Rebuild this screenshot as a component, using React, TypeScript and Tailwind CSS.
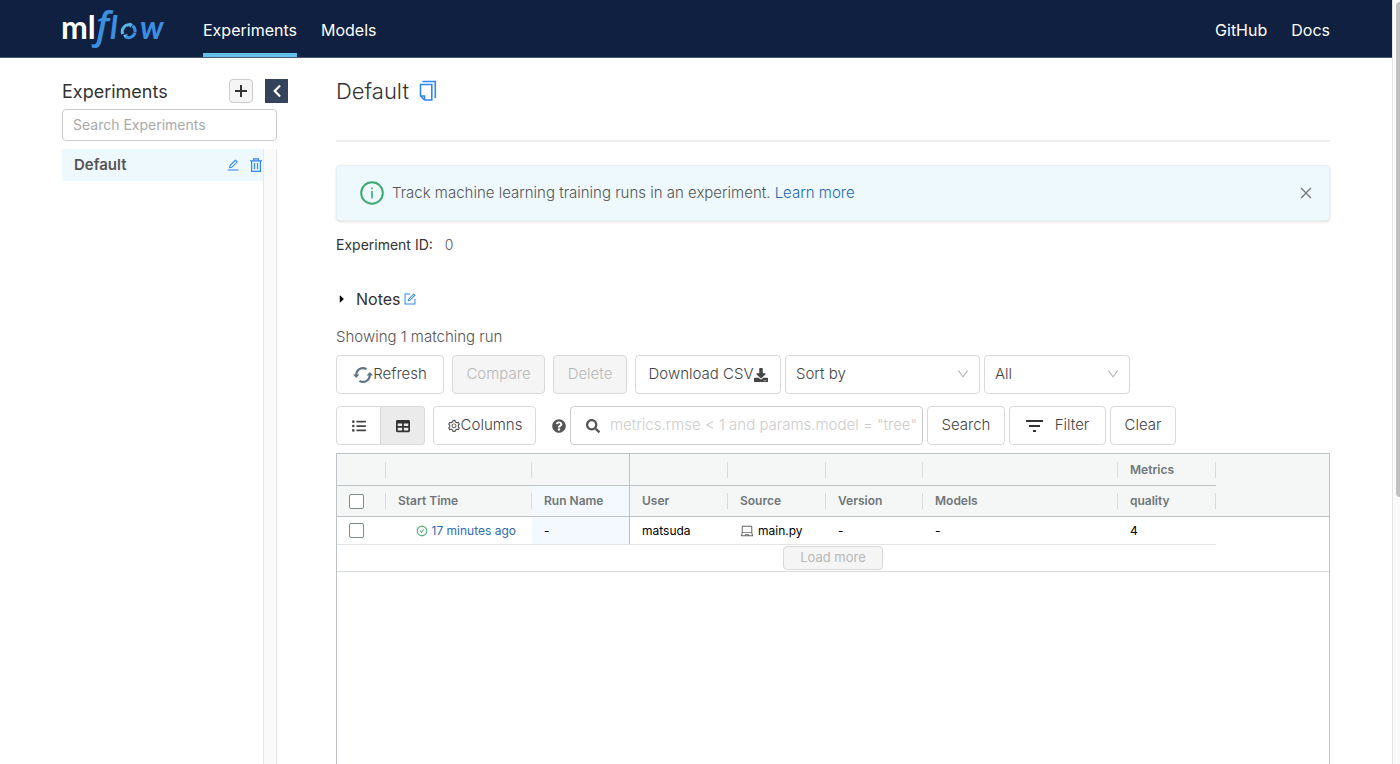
import type { ReactNode } from "react";
import clsx from "clsx";
import {
    AiOutlineCheckCircle,
    AiOutlineClose,
    AiOutlineDown,
    AiOutlineEdit,
    AiOutlineForm,
    AiOutlineLaptop,
    AiOutlineSetting,
} from "react-icons/ai";
import {
    FaCaretRight,
    FaChevronLeft,
    FaDownload,
    FaListUl,
    FaQuestionCircle,
    FaSearch,
    FaTable,
} from "react-icons/fa";

function Logo() {
    return (
        <svg
            width="108"
            height="56"
            viewBox="-2 -7 108 56"
            role="img"
            aria-label="mlflow"
            className="-ml-0.5 shrink-0 overflow-visible"
        >
            <g fontFamily="Lato, sans-serif" fontWeight="700" fontSize="32">
                <text x="-1" y="31" fill="#ffffff">ml</text>
                <text x="48" y="31" fill="#3c8fe0" fontStyle="italic">l</text>
                <text x="78" y="31" fill="#3c8fe0" fontStyle="italic">w</text>
            </g>
            <text
                x="34"
                y="31"
                fill="#3c8fe0"
                fontFamily="Open Sans, sans-serif"
                fontStyle="italic"
                fontWeight="600"
                fontSize="38"
            >
                f
            </text>
            <path d="M60.800 26A6.500 6.500 0 0 1 68 17" fill="none" stroke="#58b9e4" strokeWidth="3" />
            <path d="M70.500 17.800A6.500 6.500 0 0 1 73 24" fill="none" stroke="#3c8fe0" strokeWidth="3" />
            <path d="M73 24.500A6.500 6.500 0 0 1 63 28.500" fill="none" stroke="#3c8fe0" strokeWidth="3" />
            <path d="M67 14.500l4 1.500-3 4zM61 27l5-1-3 4z" fill="#58b9e4" />
        </svg>
    );
}

function CopyIcon() {
    return (
        <svg width="18" height="22" viewBox="0 0 18 22" fill="none" stroke="#2f86f6" strokeWidth="1.6">
            <path d="M3.500 1.500H16.300V18" />
            <path d="M1.500 4.500H12.800V20H5.500L1.500 16z" />
            <path d="M1.500 16H5.500V20" />
        </svg>
    );
}

function TrashIcon() {
    return (
        <svg width="12" height="14" viewBox="0 0 12 14" fill="none" stroke="#2f86f6" strokeWidth="1.200">
            <path d="M0 2.800h12M3.700 2.800V.800h4.600v2M1.600 3v10.300h8.800V3M4.500 5v6.300M7.500 5v6.300" />
        </svg>
    );
}

function RefreshIcon() {
    return (
        <svg width="20" height="16" viewBox="0 0 20 16" fill="none">
            <path d="M3.200 8.500A6.800 6.800 0 0 1 13.500 2.200" stroke="#5f7281" strokeWidth="2" />
            <path d="M16.800 7.500A6.800 6.800 0 0 1 6.500 13.800" stroke="#5f7281" strokeWidth="2" />
            <path d="M0 7.500h6.400L3.200 11zM13.600 8.500H20L16.800 5z" fill="#5f7281" />
        </svg>
    );
}

function FilterIcon() {
    return (
        <svg width="17" height="12" viewBox="0 0 17 12" fill="#333333">
            <path d="M0 0h17v2H0zM3 5h11v2H3zM7 10h3v2H7z" />
        </svg>
    );
}

function Button({
    children,
    className,
    disabled,
}: {
    children: ReactNode;
    className?: string;
    disabled?: boolean;
}) {
    return (
        <button
            disabled={disabled}
            className={clsx(
                "flex h-[39px] shrink-0 items-center justify-center rounded border border-[#d9d9d9]",
                disabled ? "bg-[#f5f5f5] text-[#b8b8b8]" : "bg-white text-[#444444]",
                className
            )}
        >
            {children}
        </button>
    );
}

function Select({ label, className }: { label: string; className: string }) {
    return (
        <div className={clsx("relative", className)}>
            <select
                aria-label={label}
                className="h-[39px] w-full appearance-none rounded border border-[#d9d9d9] bg-white px-2.5 text-[#444444]"
            >
                <option>{label}</option>
            </select>
            <AiOutlineDown className="pointer-events-none absolute top-3 right-2.5 size-3.5 text-[#b5b5b5]" />
        </div>
    );
}

function Header() {
    return (
        <header className="flex h-[58px] items-center border-b border-[#4d5872] bg-[#0f2040] px-[62px] text-base text-white">
            <Logo />
            <nav className="ml-[35px] flex h-full flex-1 gap-6">
                <a href="#experiments" className="flex items-center border-b-4 border-[#61bfe9] pt-1.5">
                    Experiments
                </a>
                <a href="#models" className="flex items-center pt-0.5">
                    Models
                </a>
                <a href="#github" className="ml-auto flex items-center pt-0.5">
                    GitHub
                </a>
                <a href="#docs" className="flex items-center pt-0.5">
                    Docs
                </a>
            </nav>
        </header>
    );
}

function Sidebar() {
    return (
        <aside className="flex w-[226px] shrink-0 flex-col">
            <div className="flex h-6 items-center">
                <h1 className="flex-1 pt-0.5 text-lg text-[#333333]">Experiments</h1>
                <button
                    aria-label="New experiment"
                    className="mr-3 flex size-6 items-center justify-center rounded border border-[#cccccc] bg-[#f5f5f5]"
                >
                    <svg width="12" height="12" viewBox="0 0 12 12" stroke="#333333" strokeWidth="2">
                        <path d="M6 0v12M0 6h12" />
                    </svg>
                </button>
                <button
                    aria-label="Collapse sidebar"
                    className="flex h-6 w-[23px] items-center justify-center bg-[#34425c] text-white"
                >
                    <FaChevronLeft className="size-3.5" />
                </button>
            </div>
            <input
                type="text"
                aria-label="Search Experiments"
                placeholder="Search Experiments"
                className="mt-1.5 h-8 w-[215px] rounded border border-[#cccccc] px-2.5 pb-0.5 text-sm placeholder:text-[#aaaaaa]"
            />
            <div className="mt-2 flex w-[215px] flex-1">
                <div className="flex-1">
                    <div className="flex h-8 items-center bg-[#eef9fd] pl-3 text-[15px] font-semibold text-[#555555]">
                        <a href="#default" className="flex-1">
                            Default
                        </a>
                        <button aria-label="Rename experiment" className="mr-2.5 text-[#2f86f6]">
                            <AiOutlineEdit className="size-3.5" />
                        </button>
                        <button aria-label="Delete experiment" className="mr-px">
                            <TrashIcon />
                        </button>
                    </div>
                </div>
                <div className="w-3.5 border-x border-[#e8e8e8] bg-[#fafafa]" />
            </div>
        </aside>
    );
}

function Toolbar() {
    return (
        <div className="text-[15px] font-light">
            <div className="mt-1.5 flex">
                <Button className="mr-2 w-[108px]">
                    <RefreshIcon />
                    Refresh
                </Button>
                <Button disabled className="mr-2 w-[93px]">
                    Compare
                </Button>
                <Button disabled className="mr-2 w-[74px]">
                    Delete
                </Button>
                <Button className="mr-1 w-[146px]">
                    Download CSV
                    <FaDownload className="size-3.5" />
                </Button>
                <Select label="Sort by" className="mr-1 w-[195px]" />
                <Select label="All" className="w-[146px]" />
            </div>
            <div className="mt-3 flex items-center">
                <button
                    aria-label="List view"
                    className="flex h-[39px] w-[45px] items-center justify-center rounded-l border border-[#d9d9d9] text-[#444444]"
                >
                    <FaListUl className="size-3.5" />
                </button>
                <button
                    aria-label="Table view"
                    className="mr-2 flex h-[39px] w-11 items-center justify-center rounded-r border border-l-0 border-[#d9d9d9] bg-[#ebebeb] text-[#333333]"
                >
                    <FaTable className="size-3.5" />
                </button>
                <Button className="mr-4 w-[103px]">
                    <AiOutlineSetting className="size-3.5" />
                    Columns
                </Button>
                <FaQuestionCircle className="mr-1 size-3.5 text-[#555555]" />
                <label className="mr-1 flex h-[39px] w-[353px] items-center rounded border border-[#cccccc] pl-[15px]">
                    <FaSearch className="size-3.5 text-[#555555]" />
                    <input
                        type="text"
                        aria-label="Search runs"
                        placeholder={'metrics.rmse < 1 and params.model = "tree"'}
                        className="ml-2.5 min-w-0 flex-1 placeholder:text-[#cccccc]"
                    />
                </label>
                <Button className="mr-1 w-[78px]">Search</Button>
                <Button className="mr-1 w-[97px] gap-3">
                    <FilterIcon />
                    Filter
                </Button>
                <Button className="w-[66px]">Clear</Button>
            </div>
        </div>
    );
}

function HeadCell({
    children,
    className,
    last,
}: {
    children?: ReactNode;
    className?: string;
    last?: boolean;
}) {
    return (
        <th className={clsx("border-b border-[#bdc3c7] p-0 text-left font-semibold", className)}>
            <div
                className={clsx(
                    "flex h-4 items-center pl-3",
                    !last && "border-r border-[#d9dcde]"
                )}
            >
                {children}
            </div>
        </th>
    );
}

function RunsTable() {
    return (
        <div className="mt-2 flex-1 border border-b-0 border-[#bdc3c7]">
            <table className="w-full table-fixed border-separate border-spacing-0 text-xs">
                <colgroup>
                    <col className="w-[49px]" />
                    <col className="w-[146px]" />
                    <col className="w-[98px]" />
                    <col className="w-[98px]" />
                    <col className="w-[98px]" />
                    <col className="w-[97px]" />
                    <col className="w-[195px]" />
                    <col className="w-[98px]" />
                    <col />
                </colgroup>
                <thead className="bg-[#f5f7f7] text-[#6f7679]">
                    <tr className="h-8">
                        <HeadCell />
                        <HeadCell />
                        <HeadCell last className="border-r" />
                        <HeadCell />
                        <HeadCell />
                        <HeadCell />
                        <HeadCell />
                        <HeadCell>Metrics</HeadCell>
                        <th />
                    </tr>
                    <tr className="h-[31px]">
                        <HeadCell>
                            <input
                                type="checkbox"
                                aria-label="Select all runs"
                                className="size-[15px] appearance-none rounded-xs border border-[#7f8c8d] bg-white"
                            />
                        </HeadCell>
                        <HeadCell>Start Time</HeadCell>
                        <HeadCell last className="border-r bg-[#f3f9fe]">
                            Run Name
                        </HeadCell>
                        <HeadCell>User</HeadCell>
                        <HeadCell>Source</HeadCell>
                        <HeadCell>Version</HeadCell>
                        <HeadCell>Models</HeadCell>
                        <HeadCell>quality</HeadCell>
                        <th className="border-b border-[#bdc3c7]" />
                    </tr>
                </thead>
                <tbody className="text-black">
                    <tr className="h-7 *:border-[#e2e4e5] *:p-0 *:pl-3">
                        <td className="border-b">
                            <input
                                type="checkbox"
                                aria-label="Select run"
                                className="block size-[15px] appearance-none rounded-xs border border-[#7f8c8d] bg-white"
                            />
                        </td>
                        <td className="border-b">
                            <div className="flex items-center justify-end gap-1 pr-4">
                                <AiOutlineCheckCircle className="size-3 text-[#3caa60]" />
                                <a href="#run" className="text-[#2d6bb8]">
                                    17 minutes ago
                                </a>
                            </div>
                        </td>
                        <td className="border-r border-b border-r-[#bdc3c7]! bg-[#f3f9fe]">-</td>
                        <td className="border-b">matsuda</td>
                        <td className="border-b">
                            <div className="flex items-center gap-1">
                                <AiOutlineLaptop className="size-3.5 text-[#666666]" />
                                main.py
                            </div>
                        </td>
                        <td className="border-b">-</td>
                        <td className="border-b">-</td>
                        <td className="border-b">4</td>
                        <td />
                    </tr>
                </tbody>
            </table>
            <div className="flex h-[27px] items-center justify-center border-b border-[#d9dcde]">
                <button
                    disabled
                    className="h-6 w-[100px] rounded border border-[#d9d9d9] bg-[#f5f5f5] text-[13px] text-[#b8b8b8]"
                >
                    Load more
                </button>
            </div>
        </div>
    );
}

export default function App() {
    return (
        <div className="flex min-h-screen flex-col bg-white pr-2 font-['Inter',sans-serif]">
            <Header />
            <div className="flex flex-1 gap-12 px-[62px]">
                <div className="flex pt-[21px]">
                    <Sidebar />
                </div>
                <main className="flex min-w-0 flex-1 flex-col pt-[21px] text-[#555555]">
                    <div className="flex h-6 items-center gap-2.5">
                        <h2 className="text-[22px] font-light text-[#333333]">Default</h2>
                        <button aria-label="Copy experiment name">
                            <CopyIcon />
                        </button>
                    </div>
                    <hr className="mt-[37px] border-t-2 border-[#eeeeee]" />
                    <div className="mt-[23px] flex h-14 items-center rounded border border-[#e6eff1] bg-[#eef9fd] px-[23px] text-[15px] font-light shadow-sm">
                        <svg width="24" height="24" viewBox="0 0 24 24" fill="none" stroke="#3caa70">
                            <circle cx="12" cy="12" r="10.800" strokeWidth="2" />
                            <path d="M12 10v7.500M12 6.500v1.800" strokeWidth="1.600" />
                        </svg>
                        <p className="ml-2 flex-1">
                            Track machine learning training runs in an experiment.{" "}
                            <a href="#learn" className="text-[#2368b5]">
                                Learn more
                            </a>
                        </p>
                        <button aria-label="Close" className="-mr-2 text-[#777777]">
                            <AiOutlineClose className="size-4" />
                        </button>
                    </div>
                    <p className="mt-3 text-sm leading-6 font-light">
                        <span className="mr-2 font-normal text-[#333333]">Experiment ID:</span> 0
                    </p>
                    <div className="mt-[30px] flex h-6 items-center text-base text-[#333333]">
                        <FaCaretRight className="mr-2 size-3 text-black" />
                        Notes
                        <button aria-label="Edit notes" className="ml-0.5 text-[#2f86f6]">
                            <AiOutlineForm className="size-3.5" />
                        </button>
                    </div>
                    <p className="mt-3.5 text-[15px] leading-6 font-light">Showing 1 matching run</p>
                    <Toolbar />
                    <RunsTable />
                </main>
            </div>
            <div className="fixed inset-y-0 right-0 w-2 border-l border-[#e5e5e5] bg-[#fafafa] pt-0.5 pl-[3px]">
                <div className="h-[65%] rounded-l-full bg-[#c1c1c1]" />
            </div>
        </div>
    );
}
